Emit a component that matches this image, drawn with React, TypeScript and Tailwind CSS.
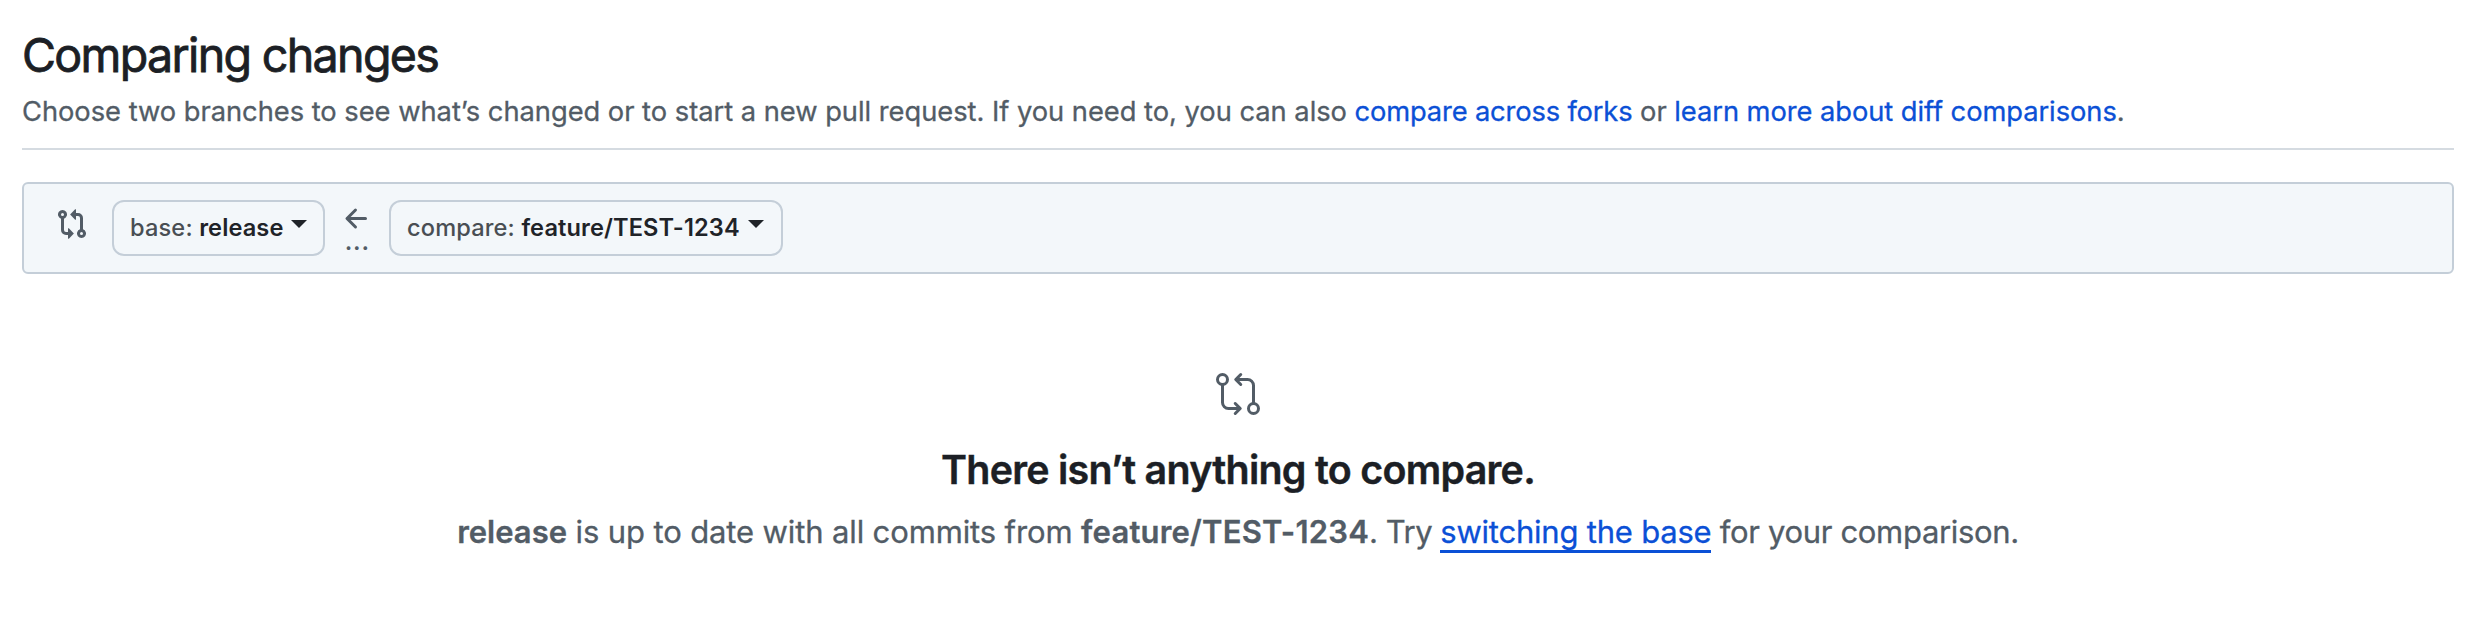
import type { ReactNode } from 'react';
import { GoGitCompare } from 'react-icons/go';

function CompareIcon() {
  return (
    <svg viewBox="0 0 16 16" className="size-8 shrink-0 fill-[#525c66]" aria-hidden="true">
      <path d="M9.573.677A.25.25 0 0 1 10 .854V2.5h1A2.5 2.5 0 0 1 13.5 5v5.628a2.251 2.251 0 1 1-1.5 0V5a1 1 0 0 0-1-1h-1v1.646a.25.25 0 0 1-.427.177L7.177 3.427a.25.25 0 0 1 0-.354ZM6 12v-1.646a.25.25 0 0 1 .427-.177l2.396 2.396a.25.25 0 0 1 0 .354l-2.396 2.396A.25.25 0 0 1 6 15.146V13.5H5A2.5 2.5 0 0 1 2.5 11V5.372a2.25 2.25 0 1 1 1.5 0V11a1 1 0 0 0 1 1Zm6.75 0a.75.75 0 1 0 0 1.5.75.75 0 0 0 0-1.5ZM4 3.25a.75.75 0 1 0-1.5 0 .75.75 0 0 0 1.5 0Z" />
    </svg>
  );
}

function ArrowLeft() {
  return (
    <svg viewBox="0 0 16 16" className="size-8 fill-[#525c66]" aria-hidden="true">
      <path d="M7.78 12.53a.75.75 0 0 1-1.06 0L2.47 8.28a.75.75 0 0 1 0-1.06l4.25-4.25a.751.751 0 0 1 1.042.018.751.751 0 0 1 .018 1.042L4.81 7h7.44a.75.75 0 0 1 0 1.5H4.81l2.97 2.97a.75.75 0 0 1 0 1.06Z" />
    </svg>
  );
}

function BranchButton({ label, className, children }: { label: string; className: string; children: ReactNode }) {
  return (
    <button
      className={`flex h-14 shrink-0 items-center rounded-xl border-2 border-[#c4ced8] pl-4 text-[23.6px] whitespace-pre ${className}`}
    >
      <span className="font-medium tracking-[0.15px] text-[#494e53]">{label} </span>
      <span className="font-semibold tracking-[0.1px] text-[#1f2328]">{children}</span>
      <svg viewBox="0 0 16 8" className="mb-2 ml-2 h-2 w-4 fill-[#1f2328]" aria-hidden="true">
        <path d="M0 0h16L8 8z" />
      </svg>
    </button>
  );
}

export default function App() {
  return (
    <main className="h-[640px] w-full overflow-hidden bg-white pt-[25px] pr-[18px] pl-[22px] font-['Inter',sans-serif] text-[#525c66]">
      <header className="border-b-2 border-[#d5dbe1] pb-[15px]">
        <h1 className="text-[46.6px] leading-[60px] tracking-[-1.69px] text-[#1c1f25] [-webkit-text-stroke:0.8px_#1c1f25]">
          Comparing changes
        </h1>
        <p className="mt-[6px] text-[27.3px] leading-[42px] tracking-[-0.025px] whitespace-nowrap [-webkit-text-stroke:0.3px]">
          Choose two branches to see what’s changed or to start a new pull request. If you need to, you can also{' '}
          <a className="tracking-[-0.16px] text-[#0b50d6]">compare across forks</a> or{' '}
          <a className="tracking-[-0.06px] text-[#0b50d6]">learn more about diff comparisons</a>.
        </p>
      </header>

      <section className="mt-8 flex h-[92px] items-center rounded-md border-2 border-[#c4ced8] bg-[#f3f7fa] pl-8">
        <div className="-mt-2">
          <CompareIcon />
        </div>
        <BranchButton label="base:" className="ml-6 w-[213px]">release</BranchButton>
        <div className="ml-4 flex h-[60px] w-8 flex-col items-center pt-[5px]">
          <ArrowLeft />
          <span className="-mt-[9px] text-[28px] leading-7 tracking-[0.3px]">...</span>
        </div>
        <BranchButton label="compare:" className="ml-4 w-[394px]">feature/TEST-1234</BranchButton>
      </section>

      <section className="flex flex-col items-center pt-[96px]">
        <GoGitCompare className="size-12" />
        <h3 className="mt-[27px] text-[39.4px] leading-[50px] font-semibold tracking-[-0.73px] text-[#1c1f25] [-webkit-text-stroke:0.4px]">
          There isn’t anything to compare.
        </h3>
        <p className="mt-[13px] text-[31px] leading-[48px] tracking-[-0.13px] whitespace-pre [-webkit-text-stroke:0.3px]">
          <strong className="font-semibold tracking-normal">release</strong> is up to date with all commits from{' '}
          <strong className="font-semibold tracking-[0.2px]">feature/TEST-1234</strong>
          <span className="tracking-[-0.5px]">. Try </span>
          <a className="border-b-3 border-[#0b50d6] -mb-px tracking-[-0.22px] text-[#0b50d6]">switching the base</a>
          <span className="tracking-[-0.33px]"> for your comparison.</span>
        </p>
      </section>
    </main>
  );
}
